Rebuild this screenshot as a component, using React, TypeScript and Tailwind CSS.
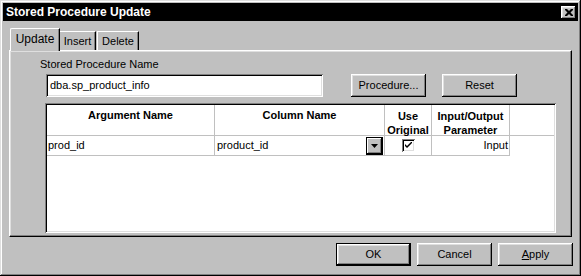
import React from 'react';

const raised =
  'shadow-[inset_-1px_-1px_#000,inset_1px_1px_#fff,inset_-2px_-2px_#808080,inset_2px_2px_#dfdfdf]';
const sunken =
  'shadow-[inset_1px_1px_#808080,inset_-1px_-1px_#fff,inset_2px_2px_#000,inset_-2px_-2px_#dfdfdf]';

const Button: React.FC<{ label: React.ReactNode; isDefault?: boolean }> = ({ label, isDefault }) => (
  <div
    className={`w-[75px] h-[23px] flex items-center justify-center bg-[#c0c0c0] ${
      isDefault
        ? 'shadow-[inset_0_0_0_1px_#000,inset_-2px_-2px_#000,inset_2px_2px_#fff,inset_-3px_-3px_#808080,inset_3px_3px_#dfdfdf]'
        : raised
    }`}
  >
    {label}
  </div>
);

export default function App() {
  return (
    <div className="w-[581px] h-[276px] bg-[#c0c0c0] text-[11px] leading-[13px] text-black font-['Liberation_Sans',Arial,sans-serif] p-[3px] flex flex-col shadow-[inset_-1px_-1px_#000,inset_1px_1px_#dfdfdf,inset_-2px_-2px_#808080,inset_2px_2px_#fff]">
      {/* title bar */}
      <div className="h-[18px] bg-black flex items-center justify-between pl-[3px] pr-[2px]">
        <span className="text-white font-bold text-[12px]">Stored Procedure Update</span>
        <div className={`w-[15px] h-[13px] bg-[#c0c0c0] flex items-center justify-center ${raised}`}>
          <svg width="8" height="7" viewBox="0 0 8 7">
            <path d="M0 0h2l2 2 2-2h2v1l-2.5 2.5 2.5 2.5v1h-2l-2-2-2 2h-2v-1l2.5-2.5-2.5-2.5z" fill="#000" />
          </svg>
        </div>
      </div>

      {/* tabs */}
      <div className="mt-[7px] ml-[7px] flex items-end h-[22px] relative z-10">
        <div className="h-[23px] w-[50px] -mb-px bg-[#c0c0c0] border-l border-t border-white rounded-tl-[2px] shadow-[inset_-1px_0_#808080] border-r border-r-black flex items-start justify-center pt-[4px] text-[12px]">
          Update
        </div>
        <div className="h-[19px] w-[36px] bg-[#c0c0c0] border-t border-r border-white border-r-black shadow-[inset_-1px_0_#808080] flex items-start justify-center pt-[3px]">
          Insert
        </div>
        <div className="h-[19px] w-[42px] ml-px bg-[#c0c0c0] border-t border-l border-white border-r border-r-black shadow-[inset_-1px_0_#808080] flex items-start justify-center pt-[3px]">
          Delete
        </div>
      </div>

      {/* tab panel */}
      <div className="mx-[6px] h-[187px] border-t border-l border-white border-r border-b border-r-black border-b-black shadow-[inset_-1px_-1px_#808080,inset_1px_1px_#dfdfdf] flex flex-col pt-[7px]">
        <div className="ml-[30px]">Stored Procedure Name</div>
        <div className="mt-[3px] flex items-center">
          <div className={`ml-[36px] w-[277px] h-[23px] bg-white flex items-center pl-[4px] ${sunken}`}>
            dba.sp_product_info
          </div>
          <div className="ml-[28px]">
            <Button label="Procedure..." />
          </div>
          <div className="ml-[16px]">
            <Button label="Reset" />
          </div>
        </div>

        {/* grid */}
        <div className={`ml-[35px] mt-[6px] w-[511px] h-[130px] bg-white p-[2px] ${sunken}`}>
          <div className="flex h-[31px] border-b border-[#c0c0c0] font-bold">
            <div className="w-[168px] border-r border-[#c0c0c0] text-center pt-[4px]">Argument Name</div>
            <div className="w-[170px] border-r border-[#c0c0c0] text-center pt-[4px]">Column Name</div>
            <div className="w-[47px] border-r border-[#c0c0c0] text-center pt-[4px] leading-[14px]">
              Use
              <br />
              Original
            </div>
            <div className="w-[78px] border-r border-[#c0c0c0] text-center pt-[4px] leading-[14px]">
              Input/Output
              <br />
              Parameter
            </div>
          </div>
          <div className="flex h-[20px] border-b border-[#c0c0c0] w-[463px]">
            <div className="w-[168px] border-r border-[#c0c0c0] flex items-center pl-[1px]">prod_id</div>
            <div className="w-[170px] border-r border-[#c0c0c0] flex items-center justify-between pl-[2px] pr-[1px]">
              <span>product_id</span>
              <div className="w-[17px] h-[18px] bg-[#c0c0c0] flex items-center justify-center shadow-[inset_-2px_-2px_#000,inset_1px_1px_#000,inset_2px_2px_#fff,inset_-3px_-3px_#808080]">
                <svg width="7" height="4" viewBox="0 0 7 4">
                  <path d="M0 0h7l-3.5 4z" fill="#000" />
                </svg>
              </div>
            </div>
            <div className="w-[47px] border-r border-[#c0c0c0] flex items-center justify-center">
              <div className={`w-[13px] h-[13px] bg-white flex items-center justify-center ${sunken}`}>
                <svg width="7" height="7" viewBox="0 0 7 7">
                  <path d="M0 2l2 2 5-5v2l-5 5-2-2z" fill="#000" />
                </svg>
              </div>
            </div>
            <div className="w-[78px] border-r border-[#c0c0c0] flex items-center justify-end pr-[1px]">Input</div>
          </div>
        </div>
      </div>

      {/* dialog buttons */}
      <div className="mt-[6px] mr-[5px] flex justify-end gap-[6px]">
        <Button label="OK" isDefault />
        <Button label="Cancel" />
        <Button
          label={
            <span>
              <span className="underline">A</span>pply
            </span>
          }
        />
      </div>
    </div>
  );
}
